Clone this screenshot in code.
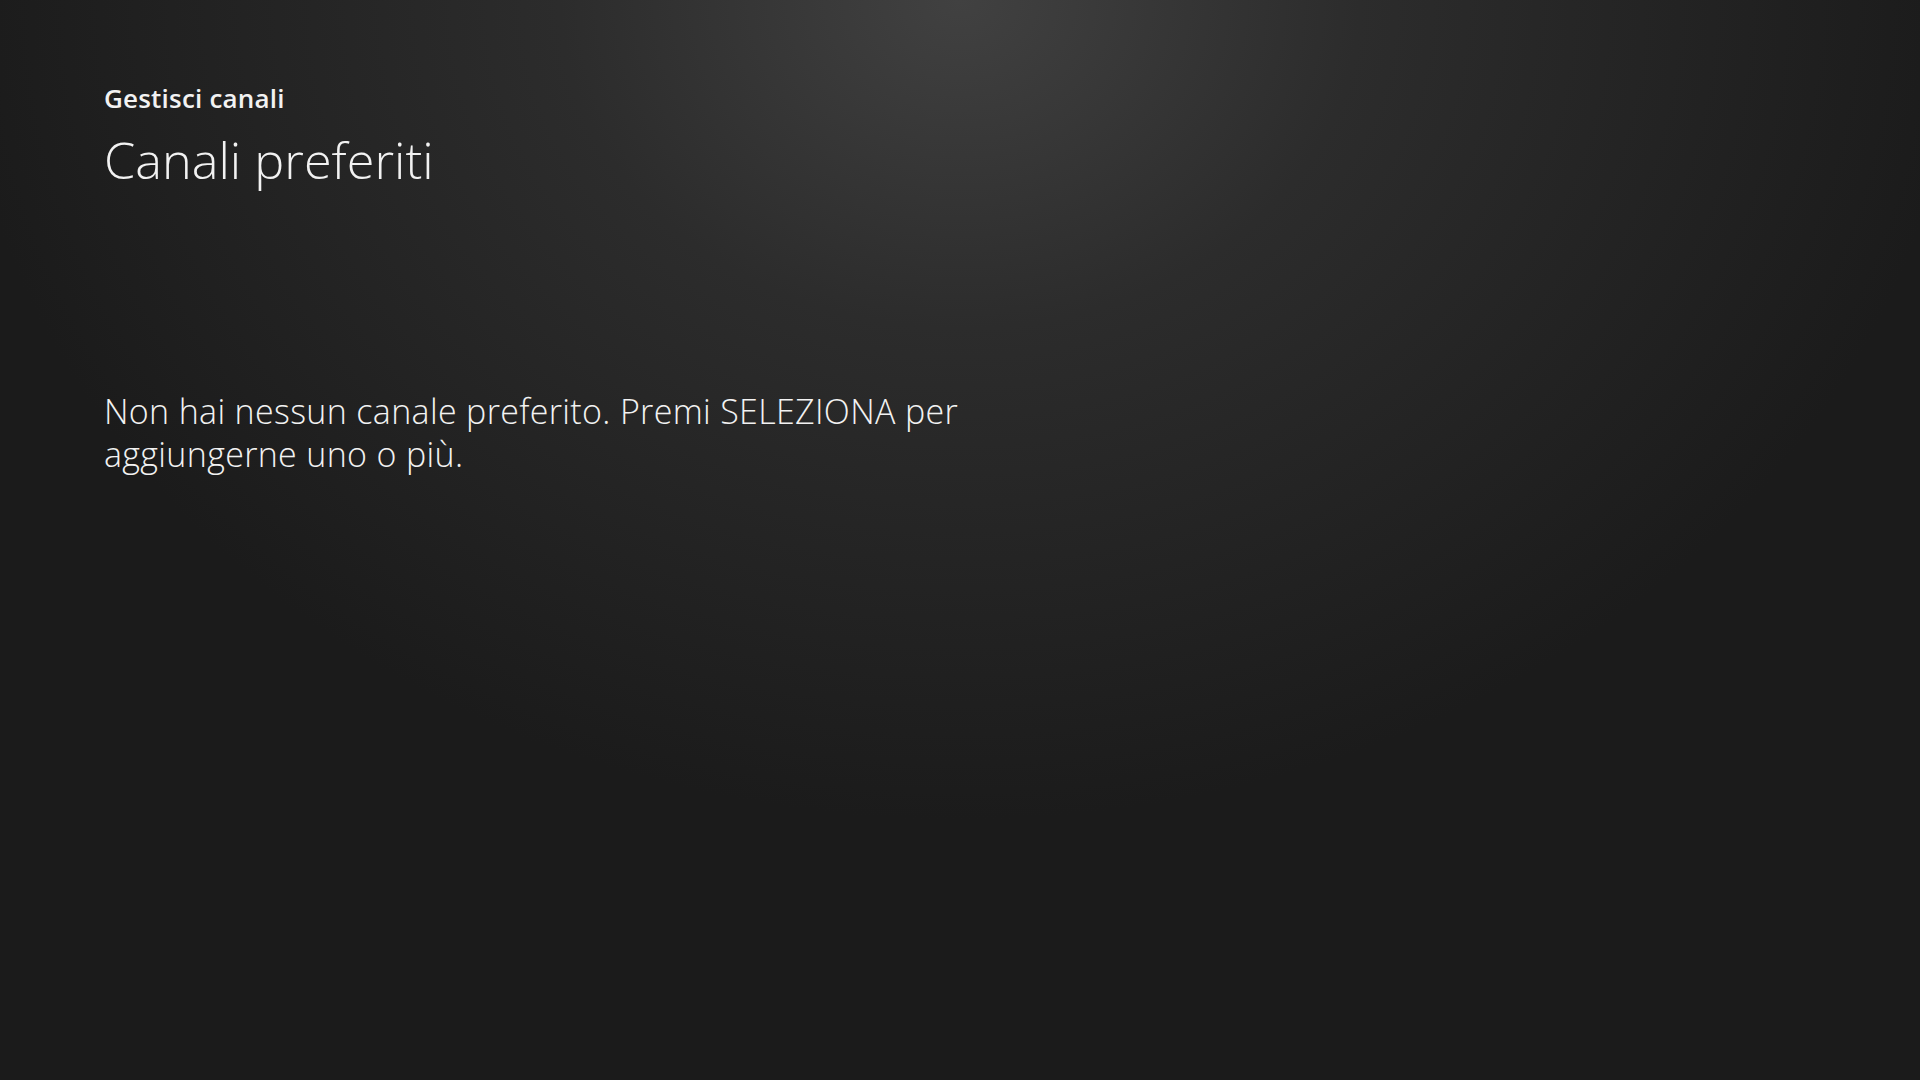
export default function App() {
  return (
    <div className="w-[1920px] h-[1080px] overflow-hidden bg-[#1b1b1b] bg-[radial-gradient(ellipse_1000px_820px_at_50%_0%,#414141_0%,#2c2c2c_40%,#1b1b1b_100%)] font-['Open_Sans',sans-serif] text-[#f2f2f2]">
      <div className="pl-[104px] pt-[82px]">
        <h2 className="text-[26px] leading-[32px] font-semibold tracking-[0.2px]">Gestisci canali</h2>
        <h1 className="mt-[16px] text-[50.4px] leading-[60px] font-light">Canali preferiti</h1>
        <p className="mt-[200px] w-[1000px] text-[34px] leading-[43px] font-light tracking-[0.33px]">
          Non hai nessun canale preferito. Premi SELEZIONA per
          <br />
          aggiungerne uno o più.
        </p>
      </div>
    </div>
  )
}
